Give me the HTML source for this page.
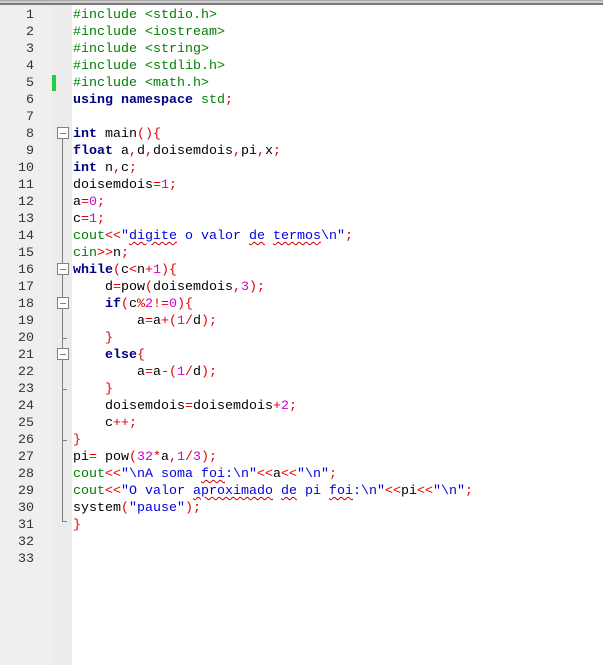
<!DOCTYPE html>
<html><head><meta charset="utf-8"><style>
html,body{margin:0;padding:0;width:603px;height:665px;overflow:hidden;background:#fff;}
.top{position:absolute;left:0;top:0;width:603px;height:5px;background:linear-gradient(#a8a8a8 0,#a8a8a8 1px,#cdcdcd 1px,#cdcdcd 3px,#7a7a7a 3px,#7a7a7a 5px);}
.ln{position:absolute;left:0;top:5px;width:52px;height:660px;background:#efefef;}
.fold{position:absolute;left:52px;top:5px;width:20px;height:660px;background:#ececec;}
pre{margin:0;position:absolute;font-family:"Liberation Mono",monospace;font-size:13.33px;line-height:17px;}
.nums{left:0;top:7px;width:34px;text-align:right;color:#333;}
.code{left:73px;top:7px;color:#000;}
.k{color:#000080;font-weight:bold}
.p{color:#008000}
.o{color:#e00000}
.n{color:#d000d0}
.s{color:#0000e0}
.g{color:#008000}
.w{text-decoration:underline wavy #d00000;text-decoration-thickness:1px;text-underline-offset:2px}
.box{position:absolute;width:10px;height:10px;border:1px solid #808080;background:#fff;}
.box:after{content:"";position:absolute;left:2px;top:4.5px;width:6px;height:1px;background:#808080;}
.v{position:absolute;width:1px;background:#808080;left:62px;}
.h{position:absolute;height:1px;width:5px;background:#808080;left:62px;}
</style></head><body>
<div class="top"></div><div class="ln"></div><div class="fold"></div>
<div style="position:absolute;left:52px;top:75px;width:4px;height:16px;background:#20d040"></div>
<div class="v" style="top:139px;height:383px"></div>
<div class="h" style="top:338px"></div>
<div class="h" style="top:389px"></div>
<div class="h" style="top:440px"></div>
<div class="h" style="top:521px"></div>
<div class="box" style="left:57px;top:127px"></div>
<div class="box" style="left:57px;top:263px"></div>
<div class="box" style="left:57px;top:297px"></div>
<div class="box" style="left:57px;top:348px"></div>
<pre class="nums">1
2
3
4
5
6
7
8
9
10
11
12
13
14
15
16
17
18
19
20
21
22
23
24
25
26
27
28
29
30
31
32
33</pre>
<pre class="code"><span class="p">#include &lt;stdio.h&gt;</span>
<span class="p">#include &lt;iostream&gt;</span>
<span class="p">#include &lt;string&gt;</span>
<span class="p">#include &lt;stdlib.h&gt;</span>
<span class="p">#include &lt;math.h&gt;</span>
<span class="k">using namespace</span> <span class="g">std</span><span class="o">;</span>

<span class="k">int</span> main<span class="o">(){</span>
<span class="k">float</span> a<span class="o">,</span>d<span class="o">,</span>doisemdois<span class="o">,</span>pi<span class="o">,</span>x<span class="o">;</span>
<span class="k">int</span> n<span class="o">,</span>c<span class="o">;</span>
doisemdois<span class="o">=</span><span class="n">1</span><span class="o">;</span>
a<span class="o">=</span><span class="n">0</span><span class="o">;</span>
c<span class="o">=</span><span class="n">1</span><span class="o">;</span>
<span class="g">cout</span><span class="o">&lt;&lt;</span><span class="s">"<span class="w">digite</span> o valor <span class="w">de</span> <span class="w">termos</span>\n"</span><span class="o">;</span>
<span class="g">cin</span><span class="o">&gt;&gt;</span>n<span class="o">;</span>
<span class="k">while</span><span class="o">(</span>c<span class="o">&lt;</span>n<span class="o">+</span><span class="n">1</span><span class="o">){</span>
    d<span class="o">=</span>pow<span class="o">(</span>doisemdois<span class="o">,</span><span class="n">3</span><span class="o">);</span>
    <span class="k">if</span><span class="o">(</span>c<span class="o">%</span><span class="n">2</span><span class="o">!=</span><span class="n">0</span><span class="o">){</span>
        a<span class="o">=</span>a<span class="o">+(</span><span class="n">1</span><span class="o">/</span>d<span class="o">);</span>
    <span class="o">}</span>
    <span class="k">else</span><span class="o">{</span>
        a<span class="o">=</span>a<span class="o">-(</span><span class="n">1</span><span class="o">/</span>d<span class="o">);</span>
    <span class="o">}</span>
    doisemdois<span class="o">=</span>doisemdois<span class="o">+</span><span class="n">2</span><span class="o">;</span>
    c<span class="o">++;</span>
<span class="o">}</span>
pi<span class="o">=</span> pow<span class="o">(</span><span class="n">32</span><span class="o">*</span>a<span class="o">,</span><span class="n">1</span><span class="o">/</span><span class="n">3</span><span class="o">);</span>
<span class="g">cout</span><span class="o">&lt;&lt;</span><span class="s">"\nA soma <span class="w">foi</span>:\n"</span><span class="o">&lt;&lt;</span>a<span class="o">&lt;&lt;</span><span class="s">"\n"</span><span class="o">;</span>
<span class="g">cout</span><span class="o">&lt;&lt;</span><span class="s">"O valor <span class="w">aproximado</span> <span class="w">de</span> pi <span class="w">foi</span>:\n"</span><span class="o">&lt;&lt;</span>pi<span class="o">&lt;&lt;</span><span class="s">"\n"</span><span class="o">;</span>
system<span class="o">(</span><span class="s">"pause"</span><span class="o">);</span>
<span class="o">}</span></pre>
</body></html>
